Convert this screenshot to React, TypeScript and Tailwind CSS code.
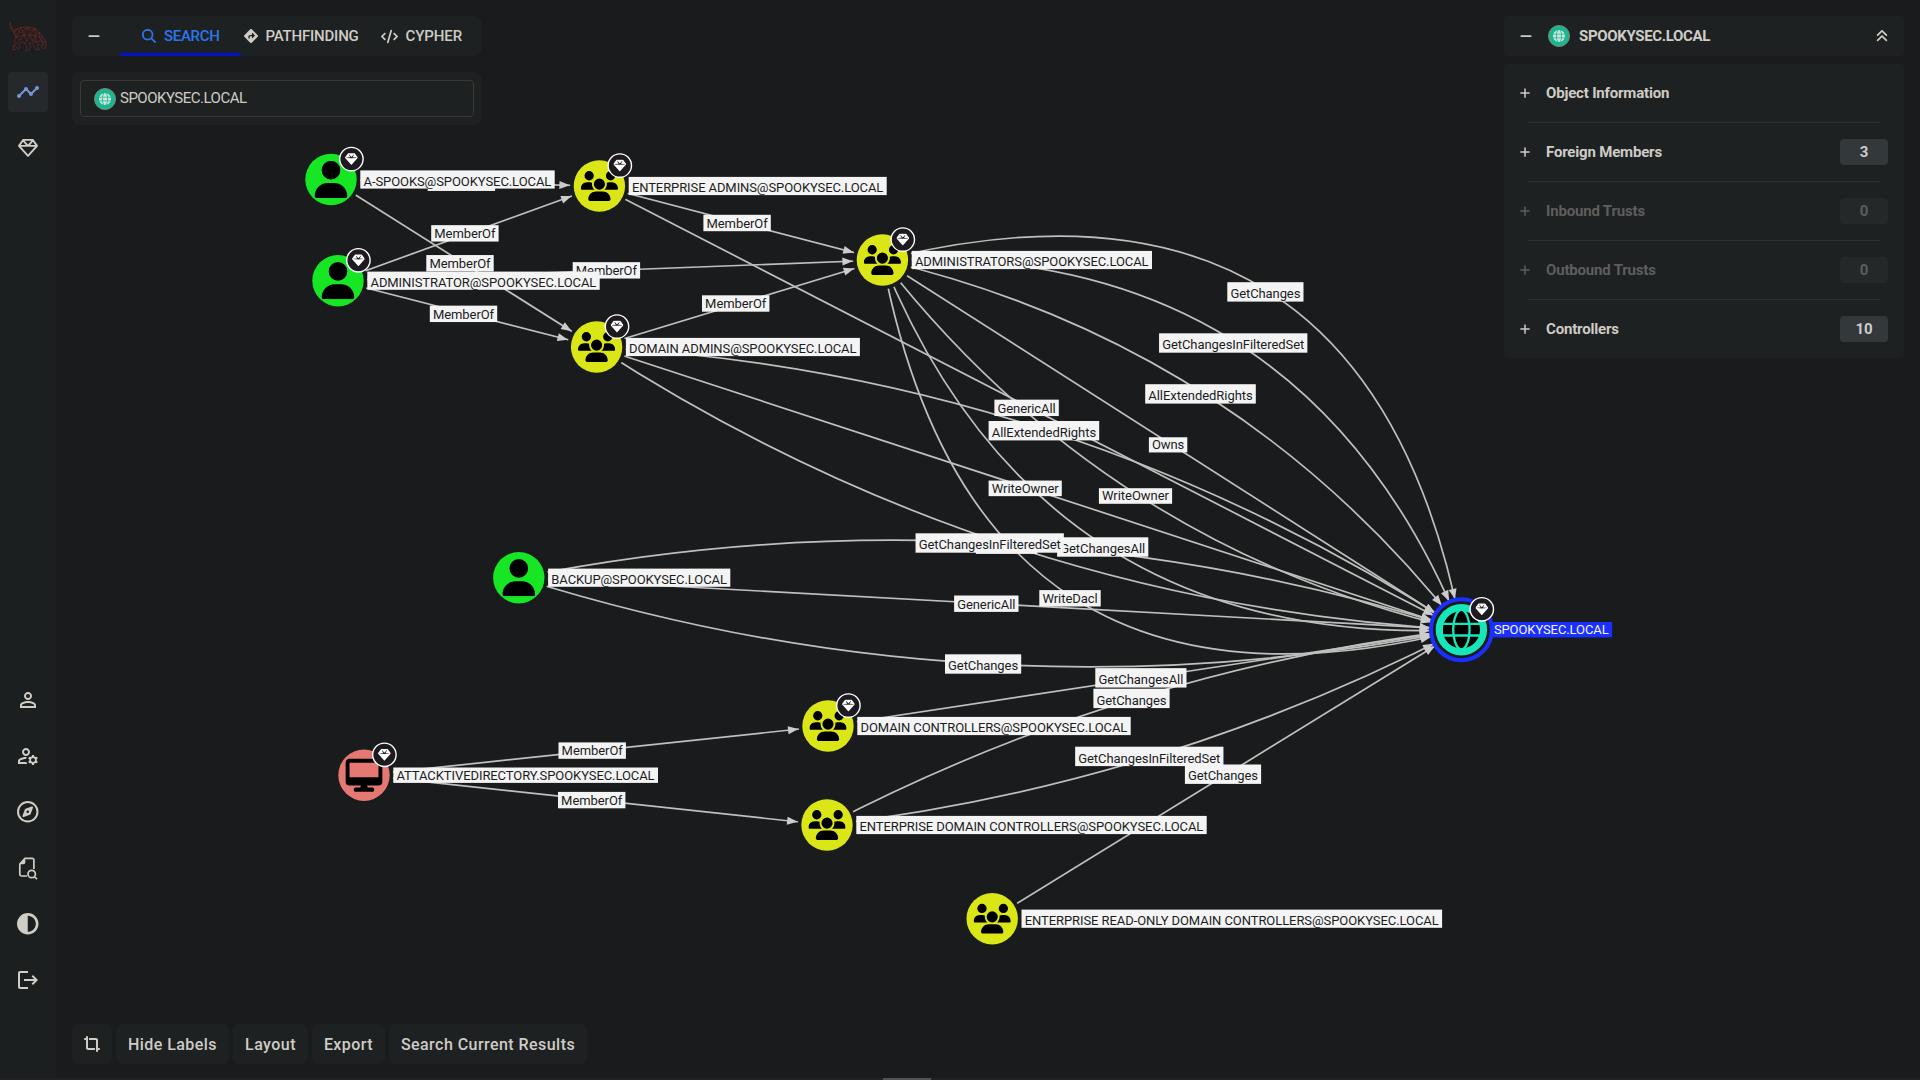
import React from "react";
import {
  FaAnglesUp,
  FaCircleHalfStroke,
  FaCode,
  FaCropSimple,
  FaDesktop,
  FaDiamondTurnRight,
  FaGem,
  FaGlobe,
  FaMagnifyingGlass,
  FaMinus,
  FaPlus,
  FaRegCompass,
  FaRegGem,
  FaUser,
  FaUsers,
} from "react-icons/fa6";
import { MdLogout, MdOutlineManageAccounts, MdPersonOutline, MdTimeline } from "react-icons/md";

type Kind = "user" | "group" | "computer" | "domain";
type GraphNode = { x: number; y: number; kind: Kind; label: string; w: number; gem?: boolean };

const NODES: Record<string, GraphNode> = {
  spooks: { x: 331, y: 179.5, kind: "user", label: "A-SPOOKS@SPOOKYSEC.LOCAL", w: 194.4, gem: true },
  admin: { x: 338, y: 280.7, kind: "user", label: "ADMINISTRATOR@SPOOKYSEC.LOCAL", w: 232.4, gem: true },
  ea: { x: 599.4, y: 186, kind: "group", label: "ENTERPRISE ADMINS@SPOOKYSEC.LOCAL", w: 258, gem: true },
  da: { x: 596.6, y: 347, kind: "group", label: "DOMAIN ADMINS@SPOOKYSEC.LOCAL", w: 234, gem: true },
  adms: { x: 882.4, y: 260, kind: "group", label: "ADMINISTRATORS@SPOOKYSEC.LOCAL", w: 240.3, gem: true },
  backup: { x: 518.8, y: 577.7, kind: "user", label: "BACKUP@SPOOKYSEC.LOCAL", w: 182.2 },
  dc: { x: 828, y: 726, kind: "group", label: "DOMAIN CONTROLLERS@SPOOKYSEC.LOCAL", w: 273.4, gem: true },
  edc: { x: 827, y: 825, kind: "group", label: "ENTERPRISE DOMAIN CONTROLLERS@SPOOKYSEC.LOCAL", w: 350.4 },
  erodc: {
    x: 992.2,
    y: 918.7,
    kind: "group",
    label: "ENTERPRISE READ-ONLY DOMAIN CONTROLLERS@SPOOKYSEC.LOCAL",
    w: 420.6,
  },
  att: { x: 364, y: 775.2, kind: "computer", label: "ATTACKTIVEDIRECTORY.SPOOKYSEC.LOCAL", w: 264.7, gem: true },
  dom: { x: 1461.4, y: 629.7, kind: "domain", label: "SPOOKYSEC.LOCAL", w: 121.4, gem: true },
};

type Edge = { from: string; to: string; label: string; mid?: [number, number]; covered?: boolean };

const EDGES: Edge[] = [
  { from: "spooks", to: "ea", label: "MemberOf", covered: true },
  { from: "spooks", to: "da", label: "MemberOf" },
  { from: "admin", to: "ea", label: "MemberOf" },
  { from: "admin", to: "da", label: "MemberOf" },
  { from: "admin", to: "adms", label: "MemberOf" },
  { from: "ea", to: "adms", label: "MemberOf" },
  { from: "da", to: "adms", label: "MemberOf" },
  { from: "adms", to: "dom", label: "GetChanges", mid: [1269.2, 291.9] },
  { from: "adms", to: "dom", label: "GetChangesInFilteredSet", mid: [1237, 343] },
  { from: "adms", to: "dom", label: "AllExtendedRights", mid: [1204.3, 393.9] },
  { from: "adms", to: "dom", label: "Owns" },
  { from: "adms", to: "dom", label: "WriteOwner", mid: [1139.3, 496] },
  { from: "adms", to: "dom", label: "GetChangesAll", mid: [1106.5, 547] },
  { from: "adms", to: "dom", label: "WriteDacl", mid: [1073.8, 598.3] },
  { from: "ea", to: "dom", label: "GenericAll" },
  { from: "da", to: "dom", label: "AllExtendedRights", mid: [1047.7, 430.7] },
  { from: "da", to: "dom", label: "WriteOwner" },
  { from: "da", to: "dom", label: "WriteDacl", mid: [1010.3, 545.7], covered: true },
  { from: "backup", to: "dom", label: "GetChangesInFilteredSet", mid: [993.5, 543] },
  { from: "backup", to: "dom", label: "GenericAll" },
  { from: "backup", to: "dom", label: "GetChanges", mid: [986.9, 664] },
  { from: "dc", to: "dom", label: "GetChangesAll" },
  { from: "edc", to: "dom", label: "GetChanges", mid: [1135.3, 698.4] },
  { from: "edc", to: "dom", label: "GetChangesInFilteredSet", mid: [1153.1, 756.4] },
  { from: "erodc", to: "dom", label: "GetChanges" },
  { from: "att", to: "dc", label: "MemberOf" },
  { from: "att", to: "edc", label: "MemberOf" },
];

/* Edge label box: width, height and baseline offset from the centre. */
const BOX: Record<string, [number, number, number]> = {
  MemberOf: [67.4, 16.4, 4.8],
  GetChanges: [76.2, 19.4, 6.1],
  GetChangesInFilteredSet: [148.3, 19.4, 6.1],
  GetChangesAll: [91.2, 19.4, 6.1],
  AllExtendedRights: [110.6, 19.4, 6.1],
  Owns: [38.4, 15.2, 4],
  WriteOwner: [73.2, 15.6, 4.2],
  WriteDacl: [61.4, 16.4, 4.8],
  GenericAll: [64.4, 16.4, 4.8],
};

const FILL: Record<Kind, string> = { user: "#17e625", group: "#dbe617", computer: "#e67873", domain: "#17e6b9" };

function geometry(e: Edge) {
  const s = NODES[e.from];
  const t = NODES[e.to];
  const mx = (s.x + t.x) / 2;
  const my = (s.y + t.y) / 2;
  const m = e.mid ?? [mx, my];
  const cx = 2 * m[0] - mx;
  const cy = 2 * m[1] - my;
  const at = (k: number) => [
    (1 - k) ** 2 * s.x + 2 * k * (1 - k) * cx + k * k * t.x,
    (1 - k) ** 2 * s.y + 2 * k * (1 - k) * cy + k * k * t.y,
  ];
  const reach = (d: number) => {
    let k = 1;
    while (k > 0.5) {
      const p = at(k);
      if (Math.hypot(p[0] - t.x, p[1] - t.y) >= d) return p;
      k -= 0.0005;
    }
    return at(k);
  };
  const r = t.kind === "domain" ? 31 : 29.5;
  const tip = reach(r);
  const base = reach(r + 10.5);
  const len = Math.hypot(tip[0] - base[0], tip[1] - base[1]);
  const nx = (-(tip[1] - base[1]) / len) * 4;
  const ny = ((tip[0] - base[0]) / len) * 4;
  return {
    m,
    path: `M${s.x} ${s.y}Q${cx} ${cy} ${t.x} ${t.y}`,
    arrow: `${tip[0]},${tip[1]} ${base[0] + nx},${base[1] + ny} ${base[0] - nx},${base[1] - ny}`,
  };
}

function NodeGlyph({ n }: { n: GraphNode }) {
  if (n.kind === "user") return <FaUser x={n.x - 18.6} y={n.y - 18.6} size={37.2} color="#000" />;
  if (n.kind === "group") return <FaUsers x={n.x - 18.6} y={n.y - 18.6} size={37.2} color="#000" />;
  if (n.kind === "computer") return <FaDesktop x={n.x - 18.6} y={n.y - 18.6} size={37.2} color="#000" />;
  return <FaGlobe x={n.x - 18.6} y={n.y - 18.6} size={37.2} color="#000" />;
}

function Graph() {
  const edges = EDGES.map((e) => ({ ...e, g: geometry(e) }));
  const nodes = Object.values(NODES);
  return (
    <svg
      className="absolute inset-0 font-['Roboto',sans-serif] text-[13px]"
      width="1920"
      height="1080"
      viewBox="0 0 1920 1080"
    >
      {edges.map((e, i) => (
        <path key={i} d={e.g.path} fill="none" stroke="#bfbfbe" strokeWidth="1.7" />
      ))}
      {nodes.map((n) => (
        <circle key={n.label} cx={n.x} cy={n.y} r="29.3" fill="#1a1b1c" />
      ))}
      {edges.map((e, i) => (
        <polygon key={i} points={e.g.arrow} fill="#cccccc" />
      ))}
      {edges.map((e, i) => {
        const [w, h, b] = BOX[e.label];
        const cx = e.g.m[0] - 3.8;
        const cy = e.g.m[1];
        return (
          <g key={i}>
            <rect x={cx - w / 2} y={cy - h / 2} width={w} height={h} fill="#f4f4f4" />
            {!e.covered && (
              <text x={cx - w / 2 + 3.1} y={cy + b} textLength={w - 6.2} fill="#1b1c1e">
                {e.label}
              </text>
            )}
          </g>
        );
      })}
      {nodes.map((n) => {
        const dom = n.kind === "domain";
        const short = dom || n.kind === "computer";
        const h = short ? 15.4 : 18.2;
        return (
          <g key={n.label}>
            <rect x={n.x + 29.3} y={n.y - h / 2} width={n.w} height={h} fill={dom ? "#1a30ff" : "#f4f4f4"} />
            <text
              x={n.x + 32.5}
              y={n.y + (short ? 4.7 : 6.4)}
              textLength={n.w - 6.6}
              fill={dom ? "#f4f4f4" : "#1b1c1e"}
            >
              {n.label}
            </text>
            {dom && <circle cx={n.x} cy={n.y} r="30.5" fill="#1a1b1c" stroke="#1a30ff" strokeWidth="4" />}
            <circle cx={n.x} cy={n.y} r="25.7" fill={FILL[n.kind]} />
            <NodeGlyph n={n} />
            {n.gem && (
              <g>
                <circle cx={n.x + 20.4} cy={n.y - 20.4} r="11.7" fill="#1d1a20" stroke="#ffffff" strokeWidth="1.4" />
                <FaGem x={n.x + 14} y={n.y - 26.8} size={12.8} color="#fff" />
              </g>
            )}
          </g>
        );
      })}
    </svg>
  );
}

function HoundLogo() {
  return (
    <svg width="40" height="32" viewBox="0 0 40 32" fill="none" stroke="#7a2325" strokeWidth="0.65">
      <path d="M2 1.500 3.300 6 6 9.500 9 8l4-1.700 6.500-.3L27 7.500l4 3.500 3.500 4 3 5.500.8 4.500-1.300 2.500-2.500-.5-2-2.500-2.500-1-.5 3 2 2-3.500.5-2-3.500-1.500-4-3.500 1 2 3-3 4.500h-3l2-2.500-.5-4-4-2.500-3.500 2.500 1 3.500-2 .5-3.500-3L5 25.500l.5 3H8M2 1.500l.3 5.500L6 11.500 8 16l-2 4 1.500 3L5 25.500" />
      <path d="m6 9.500 2 6.500 5-9.700L16 14l3.500-8L22 14l5-6.500.5 7L31 11l1 6 2.500-2-1 6 4-.5-4 4.500M8 16l8-2 6 0 5.500.5L32 17l1.500 4 3.500 4M8 16l4.500 3 3.500-5 3 6 3-6 2.500 6 3-5.500.5 6.500 4-1M12.500 19l-4.500 4M19 20l-3 3M24.500 20l3.500 1 2.500 2.500M6 11.500l3-3.500 4 4 6-6 4 4 4-2.500" />
    </svg>
  );
}

function FileSearchIcon() {
  return (
    <svg width="20" height="24" viewBox="0 0 20 24" fill="none" stroke="currentColor" strokeWidth="1.700">
      <path d="M9 20H3.500A1.700 1.700 0 0 1 1.800 18.300V8L7 2.300h7.200A1.700 1.700 0 0 1 15.900 4v9" />
      <path d="M1.500 8.300 7.300 2v4.600a1.700 1.700 0 0 1-1.700 1.700Z" fill="currentColor" stroke="none" />
      <circle cx="13.700" cy="18" r="3.700" />
      <path d="m16.300 20.700 2.700 2.500" />
    </svg>
  );
}

function NavItem({ children, active = false }: { children: React.ReactNode; active?: boolean }) {
  return (
    <div
      className={
        active
          ? "flex size-10 items-center justify-center rounded bg-[#25292c] text-[#7795d4]"
          : "flex size-10 items-center justify-center text-[#d0cdc6]"
      }
    >
      {children}
    </div>
  );
}

function DomainBadge() {
  return (
    <span className="flex size-[22px] shrink-0 items-center justify-center rounded-full border border-[#8a8478] bg-[#17b890] text-[#cfe3dc]">
      <FaGlobe size={12} />
    </span>
  );
}

const SECTIONS = [
  { title: "Object Information" },
  { title: "Foreign Members", count: "3" },
  { title: "Inbound Trusts", count: "0", off: true },
  { title: "Outbound Trusts", count: "0", off: true },
  { title: "Controllers", count: "10" },
];

function ToolButton({ label, width }: { label: string; width: string }) {
  return (
    <button
      className={`${width} h-10 rounded-md bg-[#1e2122] pt-px text-center text-[16px] font-medium tracking-[0.45px] whitespace-nowrap`}
    >
      {label}
    </button>
  );
}

export default function App() {
  return (
    <div className="relative flex h-[1080px] w-[1920px] overflow-hidden bg-[#1a1b1c] font-['Roboto',sans-serif] text-[#cfccc6]">
      <Graph />
      <nav className="relative flex w-14 shrink-0 flex-col items-center justify-between bg-[#1b1f20] pt-[21px] pb-20">
        <div className="flex flex-col items-center">
          <HoundLogo />
          <div className="mt-[19px] flex flex-col gap-4">
            <NavItem active>
              <MdTimeline size={24} />
            </NavItem>
            <NavItem>
              <FaRegGem size={20} />
            </NavItem>
          </div>
        </div>
        <div className="flex flex-col gap-4">
          <NavItem>
            <MdPersonOutline size={24} />
          </NavItem>
          <NavItem>
            <MdOutlineManageAccounts size={24} />
          </NavItem>
          <NavItem>
            <FaRegCompass size={21.5} />
          </NavItem>
          <NavItem>
            <FileSearchIcon />
          </NavItem>
          <NavItem>
            <FaCircleHalfStroke size={21.5} />
          </NavItem>
          <NavItem>
            <MdLogout size={24} />
          </NavItem>
        </div>
      </nav>

      <main className="relative flex grow items-start justify-between pt-4 pr-4 pl-4">
        <div className="flex h-[1048px] flex-col justify-between">
          <div className="flex w-[410px] flex-col gap-4">
            <div className="flex h-10 rounded-lg bg-[#1e2122] text-[15px] font-medium">
              <div className="flex w-12 items-center pl-[15px]">
                <FaMinus size={14} />
              </div>
              <div className="flex w-[121px] items-center border-b-[3px] border-[#0414c9] pt-[3px] pl-[22px] tracking-[-0.3px] text-[#2b76ee]">
                <FaMagnifyingGlass size={14} className="mr-2" />
                SEARCH
              </div>
              <div className="flex w-[137px] items-center pl-[3px] tracking-[-0.2px]">
                <FaDiamondTurnRight size={14} className="mr-[7.500px]" />
                PATHFINDING
              </div>
              <div className="flex items-center pl-[2.500px]">
                <FaCode size={17} className="mr-2" />
                <span className="tracking-[-0.1px]">CYPHER</span>
              </div>
            </div>
            <div className="h-[53px] rounded-lg bg-[#1e2122] p-2">
              <div className="flex h-[37px] items-center gap-1 rounded border border-[#3b3832] pl-[13px] text-[15px]">
                <DomainBadge />
                <span className="pb-px tracking-[-0.5px]">SPOOKYSEC.LOCAL</span>
              </div>
            </div>
          </div>
          <div className="flex gap-1">
            <button className="flex size-10 items-center justify-center rounded-md bg-[#1e2122]">
              <FaCropSimple size={16} />
            </button>
            <ToolButton label="Hide Labels" width="w-[113px]" />
            <ToolButton label="Layout" width="w-[75px]" />
            <ToolButton label="Export" width="w-[73px]" />
            <ToolButton label="Search Current Results" width="w-[198px]" />
          </div>
        </div>

        <aside className="flex w-[400px] flex-col gap-2">
          <header className="flex h-10 items-center rounded bg-[#1e2122] pr-[15px] pl-[15px] text-[15px] font-bold">
            <FaMinus size={14} className="mr-[15px]" />
            <DomainBadge />
            <span className="ml-[9px] grow tracking-[-0.34px]">SPOOKYSEC.LOCAL</span>
            <FaAnglesUp size={14} />
          </header>
          <section className="flex flex-col rounded bg-[#1e2122] pr-4 pl-[15px] text-[15px] font-bold">
            {SECTIONS.map((s, i) => (
              <React.Fragment key={s.title}>
                {i > 0 && <hr className="mr-2 ml-[9px] border-0 border-t border-[#2d2f30]" />}
                <div className={s.off ? "flex h-[58px] items-center text-[#5d5e5d]" : "flex h-[58px] items-center"}>
                  <FaPlus size={12} className="mr-[15px]" />
                  <span className="grow tracking-[-0.18px]">{s.title}</span>
                  {s.count && (
                    <span
                      className={
                        s.off
                          ? "flex h-[26px] w-12 items-center justify-center rounded bg-[#252829]"
                          : "flex h-[26px] w-12 items-center justify-center rounded bg-[#33383b]"
                      }
                    >
                      {s.count}
                    </span>
                  )}
                </div>
              </React.Fragment>
            ))}
          </section>
        </aside>
      </main>
      <div className="absolute inset-x-0 bottom-0 flex h-0.5 justify-start bg-[#202223] pl-[883px]">
        <div className="h-0.5 w-12 bg-[#515253]" />
      </div>
    </div>
  );
}
